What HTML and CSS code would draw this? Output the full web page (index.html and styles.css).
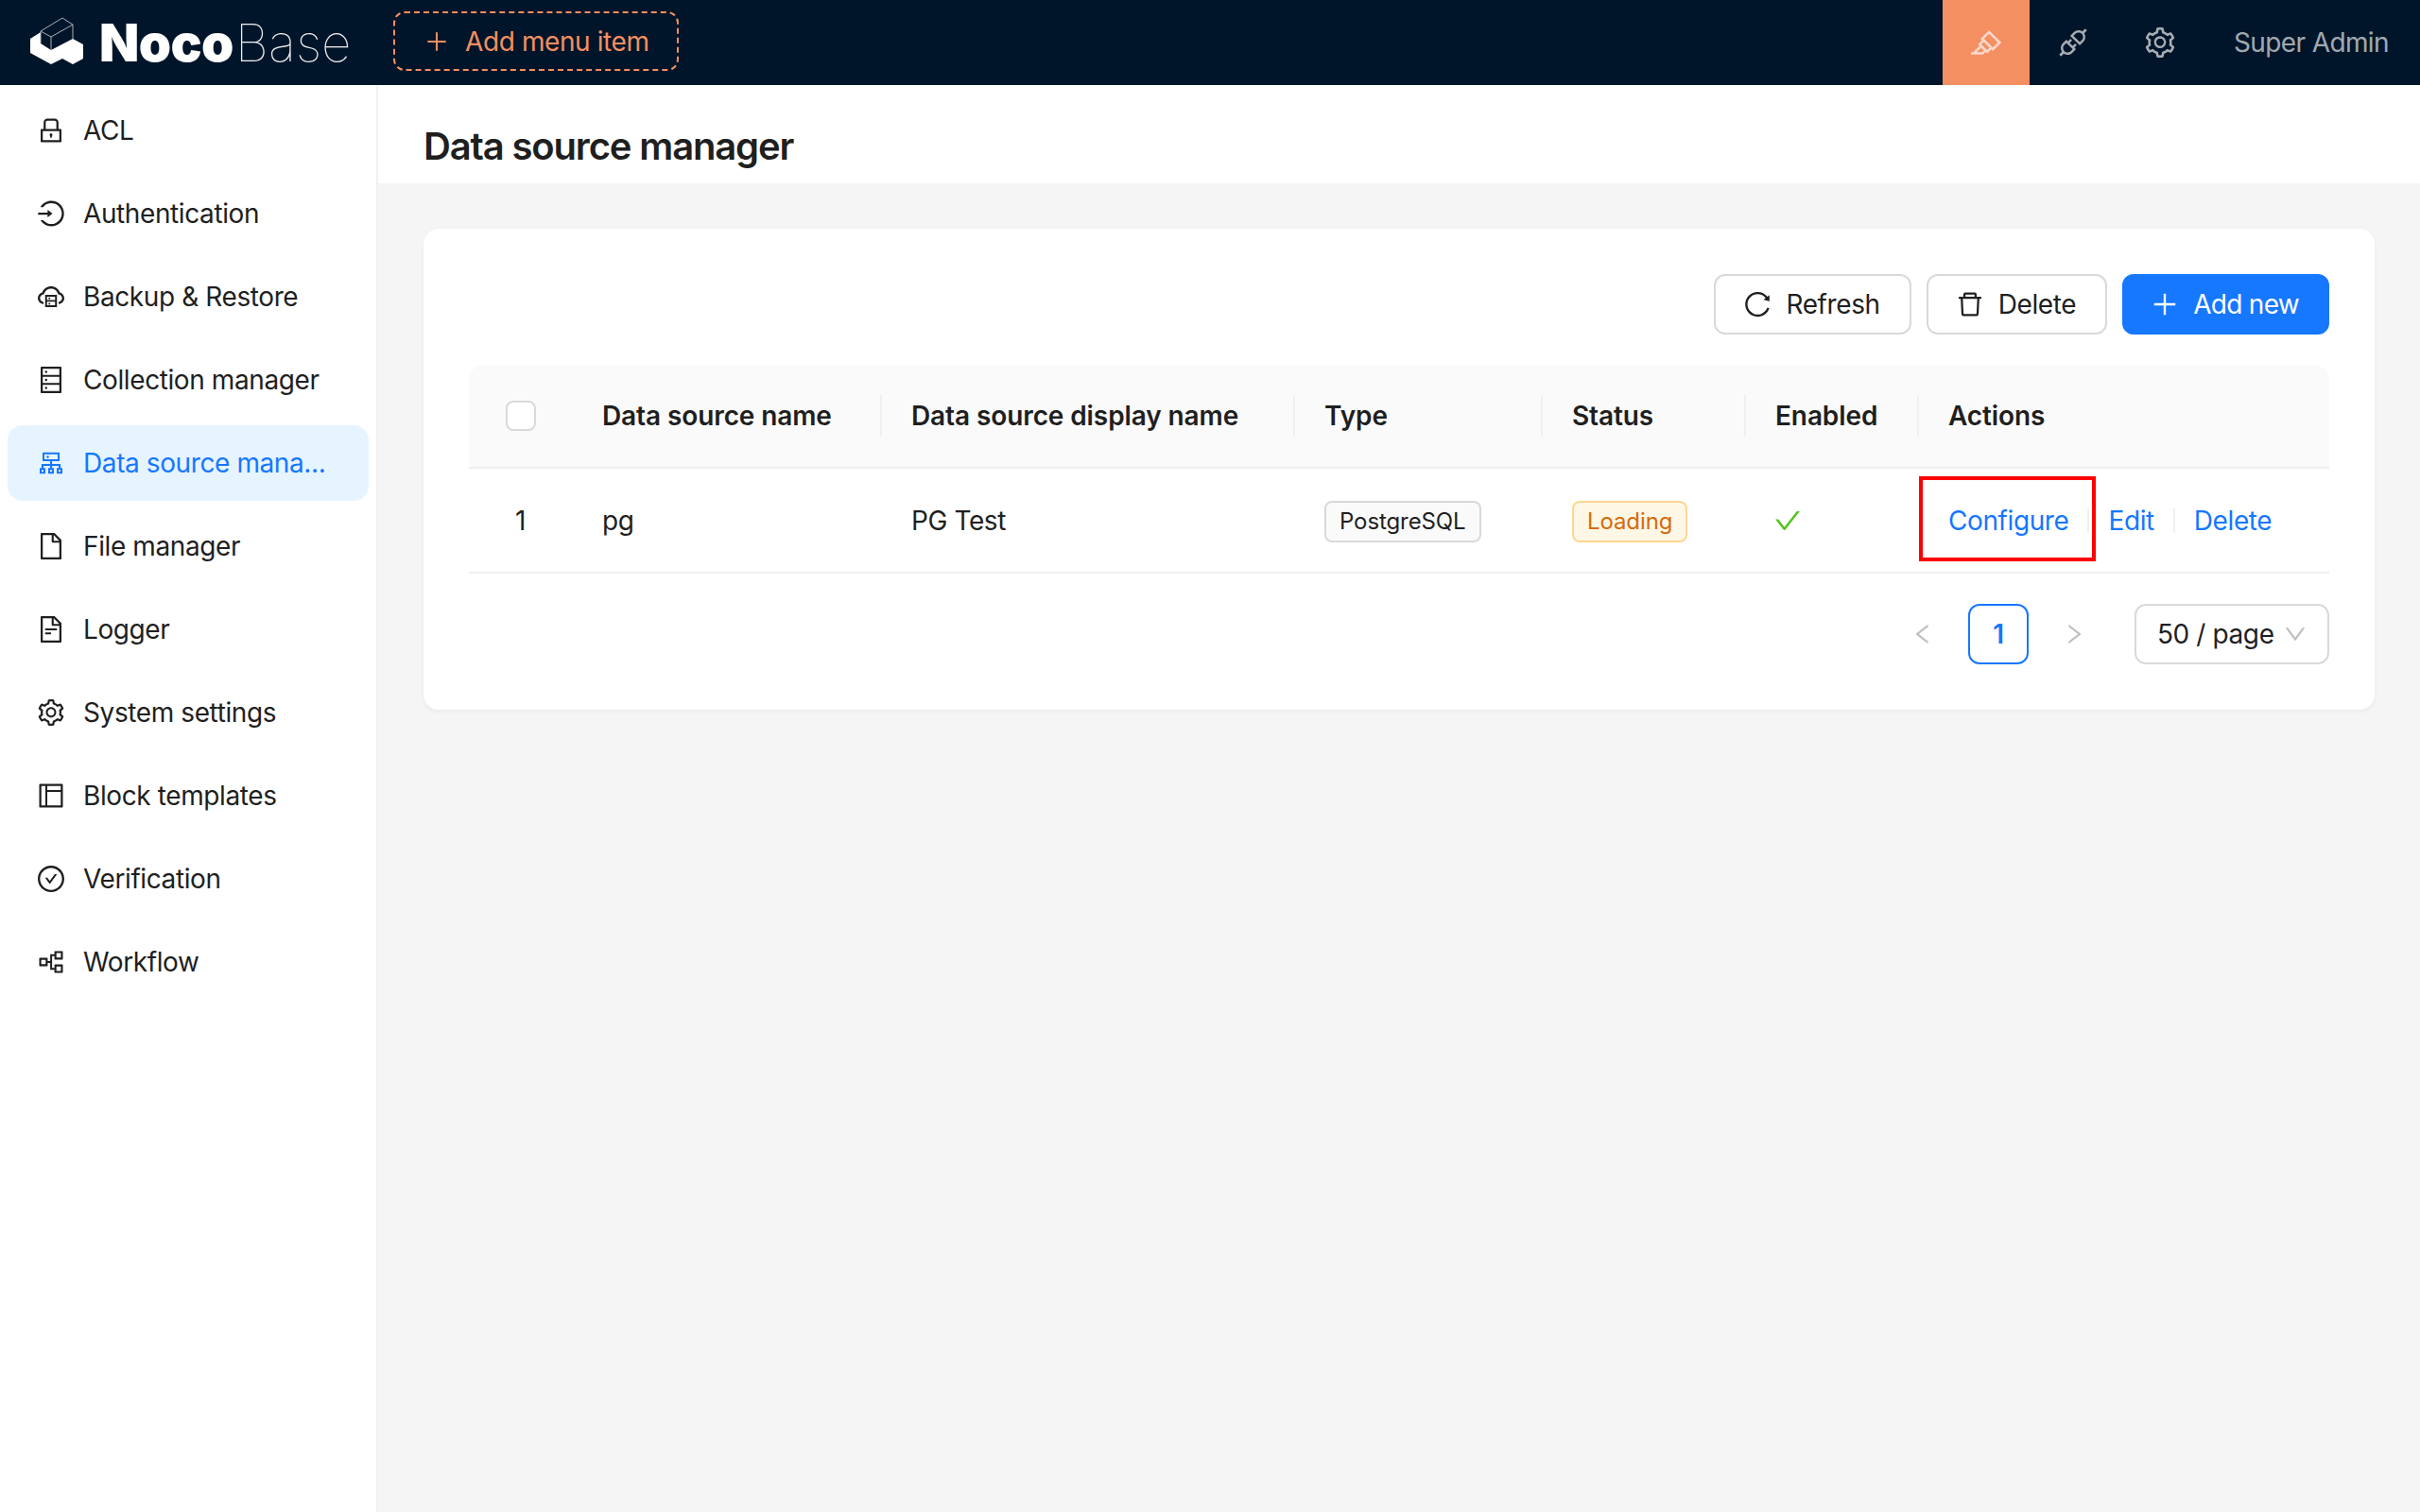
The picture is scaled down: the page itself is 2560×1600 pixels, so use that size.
FILE: index.html
```html
<!DOCTYPE html>
<html>
<head>
<meta charset="utf-8"/>
<title>Data source manager</title>
<link rel="stylesheet" href="styles.css">
</head>
<body>

<svg class="defs" width="0" height="0">
  <symbol id="i-plus" viewBox="64 64 896 896"><path d="M482 152h60q8 0 8 8v704q0 8-8 8h-60q-8 0-8-8V160q0-8 8-8z"/><path d="M192 474h672q8 0 8 8v60q0 8-8 8H160q-8 0-8-8v-60q0-8 8-8z"/></symbol>
  <symbol id="i-gear" viewBox="64 64 896 896"><path d="M924.8 625.7l-65.5-56c3.1-19 4.7-38.4 4.7-57.8s-1.6-38.8-4.7-57.8l65.5-56a32.03 32.03 0 009.3-35.2l-.9-2.6a443.74 443.74 0 00-79.7-137.9l-1.8-2.1a32.12 32.12 0 00-35.1-9.5l-81.3 28.9c-30-24.6-63.5-44-99.7-57.6l-15.7-85a32.05 32.05 0 00-25.8-25.7l-2.7-.5c-52.1-9.4-106.9-9.4-159 0l-2.7.5a32.05 32.05 0 00-25.8 25.7l-15.8 85.4a351.86 351.86 0 00-99 57.4l-81.9-29.1a32 32 0 00-35.1 9.5l-1.8 2.1a446.02 446.02 0 00-79.7 137.9l-.9 2.6c-4.5 12.5-.8 26.5 9.3 35.2l66.3 56.6c-3.1 18.8-4.6 38-4.6 57.1 0 19.2 1.5 38.4 4.6 57.1L99 625.5a32.03 32.03 0 00-9.3 35.2l.9 2.6c18.1 50.4 44.9 96.9 79.7 137.9l1.8 2.1a32.12 32.12 0 0035.1 9.5l81.9-29.1c29.8 24.5 63.1 43.9 99 57.4l15.8 85.4a32.05 32.05 0 0025.8 25.7l2.7.5a449.4 449.4 0 00159 0l2.7-.5a32.05 32.05 0 0025.8-25.7l15.7-85a350 350 0 0099.7-57.6l81.3 28.9a32 32 0 0035.1-9.5l1.8-2.1c34.8-41.1 61.6-87.5 79.7-137.9l.9-2.6c4.5-12.3.8-26.3-9.3-35zM788.3 465.9c2.5 15.1 3.8 30.6 3.8 46.1s-1.3 31-3.8 46.1l-6.6 40.1 74.7 63.9a370.03 370.03 0 01-42.6 73.6L721 702.8l-31.4 25.8c-23.9 19.6-50.5 35-79.3 45.8l-38.1 14.3-17.9 97a377.5 377.5 0 01-85 0l-17.9-97.2-37.8-14.5c-28.5-10.8-55-26.2-78.7-45.7l-31.4-25.9-93.4 33.2c-17-22.9-31.2-47.6-42.6-73.6l75.5-64.5-6.5-40c-2.4-14.9-3.7-30.3-3.7-45.5 0-15.3 1.2-30.6 3.7-45.5l6.5-40-75.5-64.5c11.3-26.1 25.6-50.7 42.6-73.6l93.4 33.2 31.4-25.9c23.7-19.5 50.2-34.9 78.7-45.7l37.9-14.3 17.9-97.2c28.1-3.2 56.8-3.2 85 0l17.9 97 38.1 14.3c28.7 10.8 55.4 26.2 79.3 45.8l31.4 25.8 92.8-32.9c17 22.9 31.2 47.6 42.6 73.6L781.8 426l6.5 39.9zM512 326c-97.2 0-176 78.8-176 176s78.8 176 176 176 176-78.8 176-176-78.8-176-176-176zm79.2 255.2A111.6 111.6 0 01512 614c-29.9 0-58-11.7-79.2-32.8A111.6 111.6 0 01400 502c0-29.9 11.7-58 32.8-79.2C454 401.6 482.1 390 512 390c29.9 0 58 11.6 79.2 32.8A111.6 111.6 0 01624 502c0 29.9-11.7 58-32.8 79.2z"/></symbol>
</svg>

<header class="topbar">
  <div class="logo">
    <svg class="logo-mark" width="80" height="70" viewBox="0 0 80 70">
      <polygon fill="#fff" points="12,31 23,24 23,36 34,43 57,31 68,37 68,52 57,58 46,52 34,58 12,46"/>
      <path fill="none" stroke="#a8afb7" stroke-width="1" d="M23 23L46 9l11 7-23 13zM34 29v14M23 23v13M57 16v15"/>
    </svg>
    <span class="logo-noco">Noco</span><span class="logo-base">Base</span>
  </div>
  <div class="add-menu"><svg class="ic-24"><use href="#i-plus"/></svg><span>Add menu item</span></div>
  <div class="topbar-right">
    <div class="top-btn active">
      <svg class="ic" viewBox="64 64 896 896"><path d="M957.6 507.4L603.2 158.2a7.9 7.9 0 00-11.2 0L353.3 393.4a8.03 8.03 0 00-.1 11.3l.1.1 40 39.4-117.2 115.3a8.03 8.03 0 00-.1 11.3l.1.1 39.5 38.9-189.1 187H72.1c-4.4 0-8.1 3.6-8.1 8V860c0 4.4 3.6 8 8 8h344.9c2.1 0 4.1-.8 5.6-2.3l76.1-75.6 40.4 39.8a7.9 7.9 0 0011.2 0l117.1-115.6 40.1 39.5a7.9 7.9 0 0011.2 0l238.7-235.2c3.4-3 3.4-8 .3-11.2zM389.8 796.2H229.6l134.4-133 80.1 78.9-54.3 54.1zm154.8-62.1L373.2 565.2l68.6-67.6 171.4 168.9-68.6 67.6zM713.1 658L450.3 399.1 597.6 254l262.8 259-147.3 145z"/></svg>
    </div>
    <div class="top-btn">
      <svg class="ic" viewBox="64 64 896 896"><path d="M917.7 148.8l-42.4-42.4c-1.6-1.6-3.6-2.3-5.7-2.3s-4.1.8-5.7 2.3l-76.1 76.1a199.27 199.27 0 00-112.1-34.3c-51.2 0-102.4 19.5-141.5 58.6L432.3 308.7a8.03 8.03 0 000 11.3L704 591.7c1.6 1.6 3.6 2.3 5.7 2.3 2 0 4.1-.8 5.7-2.3l101.9-101.9c68.9-69 77-175.7 24.3-253.5l76.1-76.1c3.1-3.2 3.1-8.3 0-11.4zM769.1 441.7l-59.4 59.4-186.8-186.8 59.4-59.4c24.9-24.9 58.1-38.7 93.4-38.7 35.3 0 68.4 13.7 93.4 38.7 24.9 24.9 38.7 58.1 38.7 93.4 0 35.3-13.8 68.4-38.7 93.4zm-190.2 105a8.03 8.03 0 00-11.3 0L501 613.3 410.7 523l66.7-66.7c3.1-3.1 3.1-8.2 0-11.3L441 408.6a8.03 8.03 0 00-11.3 0L363 475.3l-43-43a7.85 7.85 0 00-5.7-2.3c-2 0-4.1.8-5.7 2.3L206.8 534.2c-68.9 69-77 175.7-24.3 253.5l-76.1 76.1a8.03 8.03 0 000 11.3l42.4 42.4c1.6 1.6 3.6 2.3 5.7 2.3s4.1-.8 5.7-2.3l76.1-76.1c33.7 22.9 72.9 34.3 112.1 34.3 51.2 0 102.4-19.5 141.5-58.6l101.9-101.9c3.1-3.1 3.1-8.2 0-11.3l-43-43 66.7-66.7c3.1-3.1 3.1-8.2 0-11.3l-36.6-36.2zM441.7 769.1a131.32 131.32 0 01-93.4 38.7c-35.3 0-68.4-13.7-93.4-38.7a131.32 131.32 0 01-38.7-93.4c0-35.3 13.7-68.4 38.7-93.4l59.4-59.4 186.8 186.8-59.4 59.4z"/></svg>
    </div>
    <div class="top-btn"><svg class="ic"><use href="#i-gear"/></svg></div>
    <div class="top-user">Super Admin</div>
  </div>
</header>

<div class="layout">
  <ul class="sidebar">
    <li class="menu-item">
      <svg class="ic" viewBox="64 64 896 896"><path d="M832 464h-68V240c0-70.7-57.3-128-128-128H388c-70.7 0-128 57.3-128 128v224h-68c-17.7 0-32 14.3-32 32v384c0 17.7 14.3 32 32 32h640c17.7 0 32-14.3 32-32V496c0-17.7-14.3-32-32-32zM332 240c0-30.9 25.1-56 56-56h248c30.9 0 56 25.1 56 56v224H332V240zm460 600H232V536h560v304zM484 701v53c0 4.4 3.6 8 8 8h40c4.4 0 8-3.6 8-8v-53a48.01 48.01 0 10-56 0z"/></svg>
      <span>ACL</span>
    </li>
    <li class="menu-item">
      <svg class="ic" viewBox="64 64 896 896"><path d="M521.7 82c-152.5-.4-286.7 78.5-363.4 197.7-3.4 5.3.4 12.3 6.7 12.3h70.3c4.8 0 9.3-2.1 12.3-5.8 7-8.5 14.5-16.7 22.4-24.5 32.6-32.5 70.5-58.1 112.7-75.9 43.6-18.4 90-27.8 137.9-27.8 47.9 0 94.3 9.3 137.9 27.8 42.2 17.8 80.1 43.4 112.7 75.9 32.6 32.5 58.1 70.4 76 112.5C865.7 417.8 875 464.1 875 512c0 47.9-9.4 94.2-27.8 137.8-17.8 42.1-43.4 80-76 112.5s-70.5 58.1-112.7 75.9A352.8 352.8 0 01520.6 866c-47.9 0-94.3-9.4-137.9-27.8A353.84 353.84 0 01270 762.3c-7.9-7.9-15.3-16.1-22.4-24.5-3-3.7-7.6-5.8-12.3-5.8H165c-6.3 0-10.2 7-6.7 12.3C234.9 863.2 368.5 942 520.6 942c236.2 0 428-190.1 430.4-425.6C953.4 277.1 761.3 82.6 521.7 82zM395.02 624v-76h-314c-4.4 0-8-3.6-8-8v-56c0-4.4 3.6-8 8-8h314v-76c0-6.7 7.8-10.5 13-6.3l141.9 112a8 8 0 010 12.6l-141.9 112c-5.2 4.1-13 .4-13-6.3z"/></svg>
      <span>Authentication</span>
    </li>
    <li class="menu-item">
      <svg class="ic" viewBox="64 64 896 896"><path d="M704 446H320c-4.4 0-8 3.6-8 8v402c0 4.4 3.6 8 8 8h384c4.4 0 8-3.6 8-8V454c0-4.4-3.6-8-8-8zm-328 64h272v117H376V510zm272 290H376V683h272v117z"/><path d="M424 748a32 32 0 1064 0 32 32 0 10-64 0zm0-178a32 32 0 1064 0 32 32 0 10-64 0z"/><path d="M811.4 368.9C765.6 248 648.9 162 512.2 162S258.8 247.9 213 368.8C126.9 391.5 63.5 470.2 64 563.6 64.6 668 145.6 752.9 247.6 762c4.7.4 8.7-3.3 8.7-8v-60.4c0-4-3-7.4-7-7.9-27-3.4-52.5-15.2-72.1-34.5-24-23.5-37.2-55.1-37.2-88.6 0-28 9.1-54.4 26.2-76.4 16.7-21.4 40.2-36.9 66.1-43.7l37.9-10 13.9-36.7c8.6-22.8 20.6-44.2 35.7-63.5 14.9-19.2 32.6-36 52.4-50 41.1-28.9 89.5-44.2 140-44.2s98.9 15.3 140 44.2c19.9 14 37.5 30.8 52.4 50 15.1 19.3 27.1 40.7 35.7 63.5l13.8 36.6 37.8 10c54.2 14.4 92.1 63.7 92.1 120 0 33.6-13.2 65.1-37.2 88.6-19.5 19.2-44.9 31.1-71.9 34.5-4 .5-6.9 3.9-6.9 7.9V754c0 4.7 4.1 8.4 8.8 8 101.7-9.2 182.5-94 183.2-198.2.6-93.4-62.7-172.1-148.6-194.9z"/></svg>
      <span>Backup &amp; Restore</span>
    </li>
    <li class="menu-item">
      <svg class="ic" viewBox="64 64 896 896"><path d="M832 64H192c-17.7 0-32 14.3-32 32v832c0 17.7 14.3 32 32 32h640c17.7 0 32-14.3 32-32V96c0-17.7-14.3-32-32-32zm-600 72h560v208H232V136zm560 480H232V408h560v208zm0 272H232V680h560v208zM304 240a40 40 0 1080 0 40 40 0 10-80 0zm0 272a40 40 0 1080 0 40 40 0 10-80 0zm0 272a40 40 0 1080 0 40 40 0 10-80 0z"/></svg>
      <span>Collection manager</span>
    </li>
    <li class="menu-item selected">
      <svg class="ic" viewBox="64 64 896 896"><path d="M888 680h-54V540H546v-92h238c8.8 0 16-7.2 16-16V168c0-8.8-7.2-16-16-16H240c-8.8 0-16 7.2-16 16v264c0 8.8 7.2 16 16 16h238v92H190v140h-54c-4.4 0-8 3.6-8 8v176c0 4.4 3.6 8 8 8h176c4.4 0 8-3.6 8-8V688c0-4.4-3.6-8-8-8h-54v-72h220v72h-54c-4.4 0-8 3.6-8 8v176c0 4.4 3.6 8 8 8h176c4.4 0 8-3.6 8-8V688c0-4.4-3.6-8-8-8h-54v-72h220v72h-54c-4.4 0-8 3.6-8 8v176c0 4.4 3.6 8 8 8h176c4.4 0 8-3.6 8-8V688c0-4.4-3.6-8-8-8zM256 805.3c0 1.5-1.2 2.7-2.7 2.7h-58.7c-1.5 0-2.7-1.2-2.7-2.7v-58.7c0-1.5 1.2-2.7 2.7-2.7h58.7c1.5 0 2.7 1.2 2.7 2.7v58.7zm288 0c0 1.5-1.2 2.7-2.7 2.7h-58.7c-1.5 0-2.7-1.2-2.7-2.7v-58.7c0-1.5 1.2-2.7 2.7-2.7h58.7c1.5 0 2.7 1.2 2.7 2.7v58.7zM288 384V216h448v168H288zm544 421.3c0 1.5-1.2 2.7-2.7 2.7h-58.7c-1.5 0-2.7-1.2-2.7-2.7v-58.7c0-1.5 1.2-2.7 2.7-2.7h58.7c1.5 0 2.7 1.2 2.7 2.7v58.7zM360 300a40 40 0 1080 0 40 40 0 10-80 0z"/></svg>
      <span>Data source mana...</span>
    </li>
    <li class="menu-item">
      <svg class="ic" viewBox="64 64 896 896"><path d="M854.6 288.6L639.4 73.4c-6-6-14.1-9.4-22.6-9.4H192c-17.7 0-32 14.3-32 32v832c0 17.7 14.3 32 32 32h640c17.7 0 32-14.3 32-32V311.3c0-8.5-3.4-16.7-9.4-22.7zM790.2 326H602V137.8L790.2 326zm1.8 562H232V136h302v216a42 42 0 0042 42h216v494z"/></svg>
      <span>File manager</span>
    </li>
    <li class="menu-item">
      <svg class="ic" viewBox="64 64 896 896"><path d="M854.6 288.6L639.4 73.4c-6-6-14.1-9.4-22.6-9.4H192c-17.7 0-32 14.3-32 32v832c0 17.7 14.3 32 32 32h640c17.7 0 32-14.3 32-32V311.3c0-8.5-3.4-16.7-9.4-22.7zM790.2 326H602V137.8L790.2 326zm1.8 562H232V136h302v216a42 42 0 0042 42h216v494z"/><path d="M504 618H320c-4.4 0-8 3.6-8 8v48c0 4.4 3.6 8 8 8h184c4.4 0 8-3.6 8-8v-48c0-4.4-3.6-8-8-8zM312 490v48c0 4.4 3.6 8 8 8h384c4.4 0 8-3.6 8-8v-48c0-4.4-3.6-8-8-8H320c-4.4 0-8 3.6-8 8z"/></svg>
      <span>Logger</span>
    </li>
    <li class="menu-item">
      <svg class="ic"><use href="#i-gear"/></svg>
      <span>System settings</span>
    </li>
    <li class="menu-item">
      <svg class="ic" viewBox="64 64 896 896"><path d="M880 112H144c-17.7 0-32 14.3-32 32v736c0 17.7 14.3 32 32 32h736c17.7 0 32-14.3 32-32V144c0-17.7-14.3-32-32-32zm-696 72h136v656H184V184zm656 656H384V384h456v456zM384 320V184h456v136H384z"/></svg>
      <span>Block templates</span>
    </li>
    <li class="menu-item">
      <svg class="ic" viewBox="64 64 896 896"><path d="M699 353h-46.9c-10.2 0-19.9 4.9-25.9 13.3L469 584.3l-71.2-98.8c-6-8.3-15.6-13.3-25.9-13.3H325c-6.5 0-10.3 7.4-6.5 12.7l124.6 172.8a31.8 31.8 0 0051.7 0l210.6-292c3.9-5.3.1-12.7-6.4-12.7z"/><path d="M512 64C264.6 64 64 264.6 64 512s200.6 448 448 448 448-200.6 448-448S759.4 64 512 64zm0 820c-205.4 0-372-166.6-372-372s166.6-372 372-372 372 166.6 372 372-166.6 372-372 372z"/></svg>
      <span>Verification</span>
    </li>
    <li class="menu-item">
      <svg class="ic" viewBox="64 64 896 896"><path d="M640.6 429.8h257.1c7.9 0 14.3-6.4 14.3-14.3V158.3c0-7.9-6.4-14.3-14.3-14.3H640.6c-7.9 0-14.3 6.4-14.3 14.3v92.9H490.6c-3.9 0-7.1 3.2-7.1 7.1v221.5h-85.7v-96.5c0-7.9-6.4-14.3-14.3-14.3H126.3c-7.9 0-14.3 6.4-14.3 14.3v257.2c0 7.9 6.4 14.3 14.3 14.3h257.1c7.9 0 14.3-6.4 14.3-14.3V544h85.7v221.5c0 3.9 3.2 7.1 7.1 7.1h135.7v92.9c0 7.9 6.4 14.3 14.3 14.3h257.1c7.9 0 14.3-6.4 14.3-14.3v-257c0-7.9-6.4-14.3-14.3-14.3h-257c-7.9 0-14.3 6.4-14.3 14.3v100h-78.6v-393h78.6v100c0 7.9 6.4 14.3 14.3 14.3zm53.5-217.9h150V362h-150V211.9zM329.9 587h-150V437h150v150zm364.2 75.1h150v150.1h-150V662.1z"/></svg>
      <span>Workflow</span>
    </li>
  </ul>

  <main class="content">
    <div class="page-header"><h1>Data source manager</h1></div>

    <section class="card">
      <div class="toolbar">
        <div class="btn">
          <svg class="ic" viewBox="64 64 896 896"><path d="M909.1 209.3l-56.4 44.1C775.8 155.1 656.2 92 521.9 92 290 92 102.3 279.5 102 511.5 101.7 743.7 289.8 932 521.9 932c181.3 0 335.8-115 394.6-276.1 1.5-4.2-.7-8.9-4.9-10.3l-56.7-19.5a8 8 0 00-10.1 4.8c-1.8 5-3.8 10-5.9 14.9-17.3 41-42.1 77.8-73.7 109.4A344.77 344.77 0 01655.9 829c-42.3 17.9-87.4 27-133.8 27-46.5 0-91.5-9.1-133.8-27A341.5 341.5 0 01279 755.2a342.16 342.16 0 01-73.7-109.4c-17.9-42.4-27-87.4-27-133.9s9.1-91.5 27-133.9c17.3-41 42.1-77.8 73.7-109.4 31.6-31.6 68.4-56.4 109.3-73.8 42.3-17.9 87.4-27 133.8-27 46.5 0 91.5 9.1 133.8 27a341.5 341.5 0 01109.3 73.8c9.9 9.9 19.2 20.4 27.8 31.4l-60.2 47a8 8 0 003 14.1l175.6 43c5 1.2 9.9-2.6 9.9-7.7l.8-180.9c-.1-6.6-7.8-10.3-13-6.2z"/></svg>
          <span>Refresh</span>
        </div>
        <div class="btn">
          <svg class="ic" viewBox="64 64 896 896"><path d="M360 184h-8c4.4 0 8-3.6 8-8v8h304v-8c0 4.4 3.6 8 8 8h-8v72h72v-80c0-35.3-28.7-64-64-64H352c-35.3 0-64 28.7-64 64v80h72v-72zm504 72H160c-17.7 0-32 14.3-32 32v32c0 4.4 3.6 8 8 8h60.4l24.7 523c1.6 34.1 29.8 61 63.9 61h454c34.2 0 62.3-26.8 63.9-61l24.7-523H888c4.4 0 8-3.6 8-8v-32c0-17.7-14.3-32-32-32zM731.3 840H292.7l-24.2-512h487l-24.2 512z"/></svg>
          <span>Delete</span>
        </div>
        <div class="btn primary">
          <svg class="ic"><use href="#i-plus"/></svg>
          <span>Add new</span>
        </div>
      </div>

      <table class="grid">
        <thead>
          <tr>
            <th class="c-check"><span class="checkbox"></span></th>
            <th class="c-name">Data source name</th>
            <th class="c-display">Data source display name</th>
            <th class="c-type">Type</th>
            <th class="c-status">Status</th>
            <th class="c-enabled">Enabled</th>
            <th class="c-actions">Actions</th>
          </tr>
        </thead>
        <tbody>
          <tr>
            <td class="c-check">1</td>
            <td>pg</td>
            <td>PG Test</td>
            <td><span class="tag">PostgreSQL</span></td>
            <td><span class="tag tag-warn">Loading</span></td>
            <td>
              <svg class="ic-check" viewBox="64 64 896 896"><path d="M912 190h-69.9c-9.8 0-19.1 4.5-25.1 12.2L404.7 724.5 207 474a32 32 0 00-25.1-12.2H112c-6.7 0-10.4 7.7-6.3 12.9l273.9 347c12.8 16.2 37.4 16.2 50.3 0l488.4-618.9c4.1-5.1.4-12.8-6.3-12.8z"/></svg>
            </td>
            <td class="actions-cell">
              <div class="actions">
                <a>Configure</a><i></i><a>Edit</a><i></i><a>Delete</a>
              </div>
              <div class="callout"></div>
            </td>
          </tr>
        </tbody>
      </table>

      <div class="pager">
        <div class="pager-arrow">
          <svg class="ic-24" viewBox="64 64 896 896"><path d="M724 218.3V141c0-6.7-7.7-10.4-12.9-6.3L260.3 486.8a31.86 31.86 0 000 50.3l450.8 352.1c5.3 4.1 12.9.4 12.9-6.3v-77.3c0-4.9-2.3-9.6-6.1-12.6l-360-281 360-281.1c3.8-3 6.1-7.7 6.1-12.6z"/></svg>
        </div>
        <div class="pager-num">1</div>
        <div class="pager-arrow">
          <svg class="ic-24" viewBox="64 64 896 896"><path d="M765.7 486.8L314.9 134.7A7.97 7.97 0 00302 141v77.3c0 4.9 2.3 9.6 6.1 12.6l360 281.1-360 281.1c-3.9 3-6.1 7.7-6.1 12.6V883c0 6.6 7.6 10.3 12.9 6.2l450.8-352.1a31.96 31.96 0 000-50.3z"/></svg>
        </div>
        <div class="pager-size">
          <span>50 / page</span>
          <svg class="ic-24" viewBox="64 64 896 896"><path d="M884 256h-75c-5.1 0-9.9 2.5-12.9 6.6L512 654.2 227.9 262.6c-3-4.1-7.8-6.6-12.9-6.6h-75c-6.5 0-10.3 7.4-6.5 12.7l352.6 486.1c12.8 17.6 39 17.6 51.7 0l352.6-486.1c3.9-5.3.1-12.7-6.4-12.7z"/></svg>
        </div>
      </div>
    </section>
  </main>
</div>

</body>
</html>
```

FILE: styles.css
```css
* {
  box-sizing: border-box;
}

html, body {
  margin: 0;
  height: 100%;
}

body {
  font-family: Inter, "Liberation Sans", sans-serif;
  font-size: 28px;
  line-height: 44px;
  letter-spacing: -.4px;
  color: #1f1f1f;
  background: #f5f5f5;
  overflow: hidden;
}

.defs {
  position: absolute;
}

.ic, .ic-24 {
  display: block;
  flex: none;
  width: 28px;
  height: 28px;
  fill: currentColor;
}

.ic-24 {
  width: 24px;
  height: 24px;
}

/* top bar */
.topbar {
  display: flex;
  height: 90px;
  background: #001529;
}

.logo {
  display: flex;
  align-items: center;
  width: 416px;
  padding-left: 20px;
  color: #fff;
  letter-spacing: 0;
}

.logo-mark {
  flex: none;
  margin-right: 5px;
}

.logo-noco {
  font-size: 55px;
  font-weight: 900;
  letter-spacing: -.6px;
}

.logo-base {
  font-size: 55px;
  font-weight: 100;
  color: #eceef0;
  margin-left: 2px;
}

.add-menu {
  display: flex;
  align-items: center;
  gap: 18px;
  width: 302px;
  height: 63px;
  margin-top: 12px;
  padding-left: 32px;
  color: #f48f62;
  border: 2px dashed #f48f62;
  border-radius: 12px;
}

.topbar-right {
  display: flex;
  align-items: center;
  margin-left: auto;
}

.top-btn {
  display: flex;
  align-items: center;
  justify-content: center;
  width: 92px;
  height: 90px;
  color: rgba(255, 255, 255, .65);
}

.top-btn .ic {
  width: 32px;
  height: 32px;
}

.top-btn.active {
  background: #f48f62;
}

.top-user {
  padding: 0 33px 0 32px;
  letter-spacing: -.6px;
  color: rgba(255, 255, 255, .65);
}

/* left menu */
.layout {
  display: flex;
  height: 1510px;
}

.sidebar {
  display: flex;
  flex-direction: column;
  gap: 8px;
  flex: none;
  width: 400px;
  margin: 0;
  padding: 8px 8px 0;
  list-style: none;
  background: #fff;
  border-right: 2px solid #f0f0f0;
}

.menu-item {
  display: flex;
  align-items: center;
  gap: 20px;
  width: 382px;
  height: 80px;
  padding-left: 32px;
  border-radius: 16px;
}

.menu-item.selected {
  color: #1677ff;
  background: #e6f4ff;
}

/* page */
.content {
  flex: 1;
  min-width: 0;
}

.page-header {
  height: 104px;
  padding: 38px 48px 0;
  background: #fff;
}

.page-header h1 {
  margin: 0;
  font-size: 40px;
  line-height: 54px;
  font-weight: 600;
  letter-spacing: -1.15px;
}

.card {
  margin: 48px 48px 0;
  padding: 48px;
  background: #fff;
  border-radius: 16px;
  box-shadow: 0 2px 4px rgba(0, 0, 0, .03), 0 2px 8px rgba(0, 0, 0, .02);
}

.toolbar {
  display: flex;
  justify-content: flex-end;
  gap: 16px;
}

.btn {
  display: flex;
  align-items: center;
  gap: 16px;
  height: 64px;
  padding: 0 31px 0 30px;
  background: #fff;
  border: 2px solid #d9d9d9;
  border-radius: 12px;
}

.btn.primary {
  padding: 0 30px 0 29px;
  letter-spacing: -.7px;
  color: #fff;
  background: #1677ff;
  border-color: #1677ff;
}

/* table */
.grid {
  width: 100%;
  margin-top: 32px;
  table-layout: fixed;
  border-collapse: separate;
  border-spacing: 0;
}

.grid th, .grid td {
  padding: 0 32px;
  text-align: left;
  border-bottom: 2px solid #f0f0f0;
}

.grid th {
  position: relative;
  height: 110px;
  font-weight: 600;
  letter-spacing: -.1px;
  background: #fafafa;
}

.grid th:first-child {
  border-top-left-radius: 16px;
}

.grid th:last-child {
  border-top-right-radius: 16px;
}

.grid th + th + th::before {
  content: "";
  position: absolute;
  left: -1px;
  top: 32px;
  width: 2px;
  height: 44px;
  background: #f0f0f0;
}

.grid td {
  height: 111px;
}

.grid .c-check {
  width: 109px;
  padding: 0;
  text-align: center;
}

.c-name { width: 327px; }
.c-display { width: 437px; }
.c-type { width: 262px; }
.c-status { width: 215px; }
.c-enabled { width: 183px; }

.checkbox {
  display: block;
  width: 32px;
  height: 32px;
  margin: 0 auto;
  background: #fff;
  border: 2px solid #d9d9d9;
  border-radius: 8px;
}

.tag {
  display: inline-block;
  height: 44px;
  padding: 0 14px;
  font-size: 24px;
  line-height: 40px;
  letter-spacing: -.1px;
  vertical-align: middle;
  background: #fafafa;
  border: 2px solid #d9d9d9;
  border-radius: 8px;
}

.tag-warn {
  color: #d46b08;
  background: #fff7e6;
  border-color: #ffd591;
}

.ic-check {
  display: block;
  width: 28px;
  height: 28px;
  margin-left: -1px;
  fill: #52c41a;
}

.actions-cell {
  position: relative;
}

.actions {
  display: flex;
  align-items: center;
  gap: 20px;
  color: #1677ff;
}

.actions i {
  width: 2px;
  height: 26px;
  background: #f0f0f0;
}

/* red annotation box drawn on the screenshot */
.callout {
  position: absolute;
  left: 1px;
  top: 8px;
  width: 187px;
  height: 90px;
  border: 4px solid #ff0000;
}

/* pagination */
.pager {
  display: flex;
  justify-content: flex-end;
  align-items: center;
  margin-top: 32px;
}

.pager-arrow {
  display: flex;
  align-items: center;
  justify-content: center;
  width: 64px;
  height: 64px;
  color: #bfbfbf;
}

.pager-num {
  width: 64px;
  height: 64px;
  margin: 0 16px;
  font-weight: 600;
  line-height: 60px;
  text-align: center;
  color: #1677ff;
  border: 2px solid #1677ff;
  border-radius: 12px;
}

.pager-size {
  display: flex;
  align-items: center;
  justify-content: space-between;
  width: 206px;
  height: 64px;
  margin-left: 32px;
  padding: 0 22px 0 22px;
  border: 2px solid #d9d9d9;
  border-radius: 12px;
}

.pager-size svg {
  color: #bfbfbf;
}
```
